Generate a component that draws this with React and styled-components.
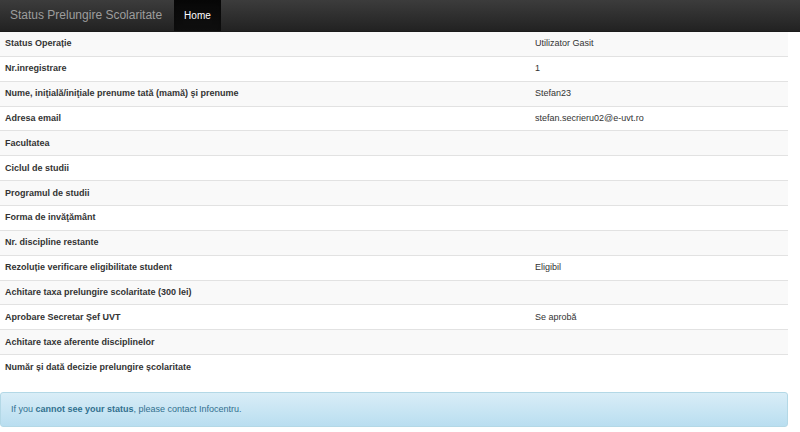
import React from "react";
import styled, { createGlobalStyle } from "styled-components";

const GlobalStyle = createGlobalStyle`
  *, *::before, *::after { box-sizing: border-box; }
  body {
    margin: 0;
    background: #fff;
    color: #333;
    font: 9px/13px "Liberation Sans", Arial, sans-serif;
  }
`;

const Navbar = styled.nav`
  display: flex;
  background: linear-gradient(#3c3c3c, #222);
  border-bottom: 1px solid #1c1c1c;
`;

const Brand = styled.a`
  padding: 0 12px 0 10px;
  font-size: 12px;
  line-height: 31px;
  color: #9d9d9d;
  text-decoration: none;
`;

const NavLink = styled.a`
  padding: 0 10px;
  font-size: 10px;
  line-height: 31px;
  color: #fff;
  text-decoration: none;
  background: linear-gradient(#080808, #0f0f0f);
  box-shadow: inset 0 3px 9px rgba(0, 0, 0, 0.25);
`;

const Content = styled.main`
  padding-right: 12px;
`;

const StatusTable = styled.table`
  width: 100%;
  height: 347px;
  table-layout: fixed;
  border-collapse: collapse;
  margin-bottom: 13px;
`;

const Row = styled.tr`
  &:nth-child(odd) { background: #f9f9f9; }
  & + & { border-top: 1px solid #e2e2e2; }
`;

const Label = styled.th`
  width: 67%;
  padding: 5px;
  text-align: left;
  font-weight: 700;
`;

const Value = styled.td`
  padding: 5px 7px;
`;

const Notice = styled.div`
  padding: 10px;
  border: 1px solid #b3d8e6;
  border-radius: 3px;
  color: #31708f;
  background: linear-gradient(#d9edf7, #b9def0);
`;

const rows = [
  ["Status Operație", "Utilizator Gasit"],
  ["Nr.inregistrare", "1"],
  ["Nume, iniţială/iniţiale prenume tată (mamă) şi prenume", "Stefan23"],
  ["Adresa email", "stefan.secrieru02@e-uvt.ro"],
  ["Facultatea", ""],
  ["Ciclul de studii", ""],
  ["Programul de studii", ""],
  ["Forma de invăţământ", ""],
  ["Nr. discipline restante", ""],
  ["Rezoluție verificare eligibilitate student", "Eligibil"],
  ["Achitare taxa prelungire scolaritate (300 lei)", ""],
  ["Aprobare Secretar Șef UVT", "Se aprobă"],
  ["Achitare taxe aferente disciplinelor", ""],
  ["Număr și dată decizie prelungire școlaritate", ""],
];

export default function App() {
  return (
    <>
      <GlobalStyle />
      <Navbar>
        <Brand href="#">Status Prelungire Scolaritate</Brand>
        <NavLink href="#">Home</NavLink>
      </Navbar>
      <Content>
        <StatusTable>
          <tbody>
            {rows.map(([label, value]) => (
              <Row key={label}>
                <Label scope="row">{label}</Label>
                <Value>{value}</Value>
              </Row>
            ))}
          </tbody>
        </StatusTable>
        <Notice role="alert">
          If you <strong>cannot see your status</strong>, please contact Infocentru.
        </Notice>
      </Content>
    </>
  );
}
